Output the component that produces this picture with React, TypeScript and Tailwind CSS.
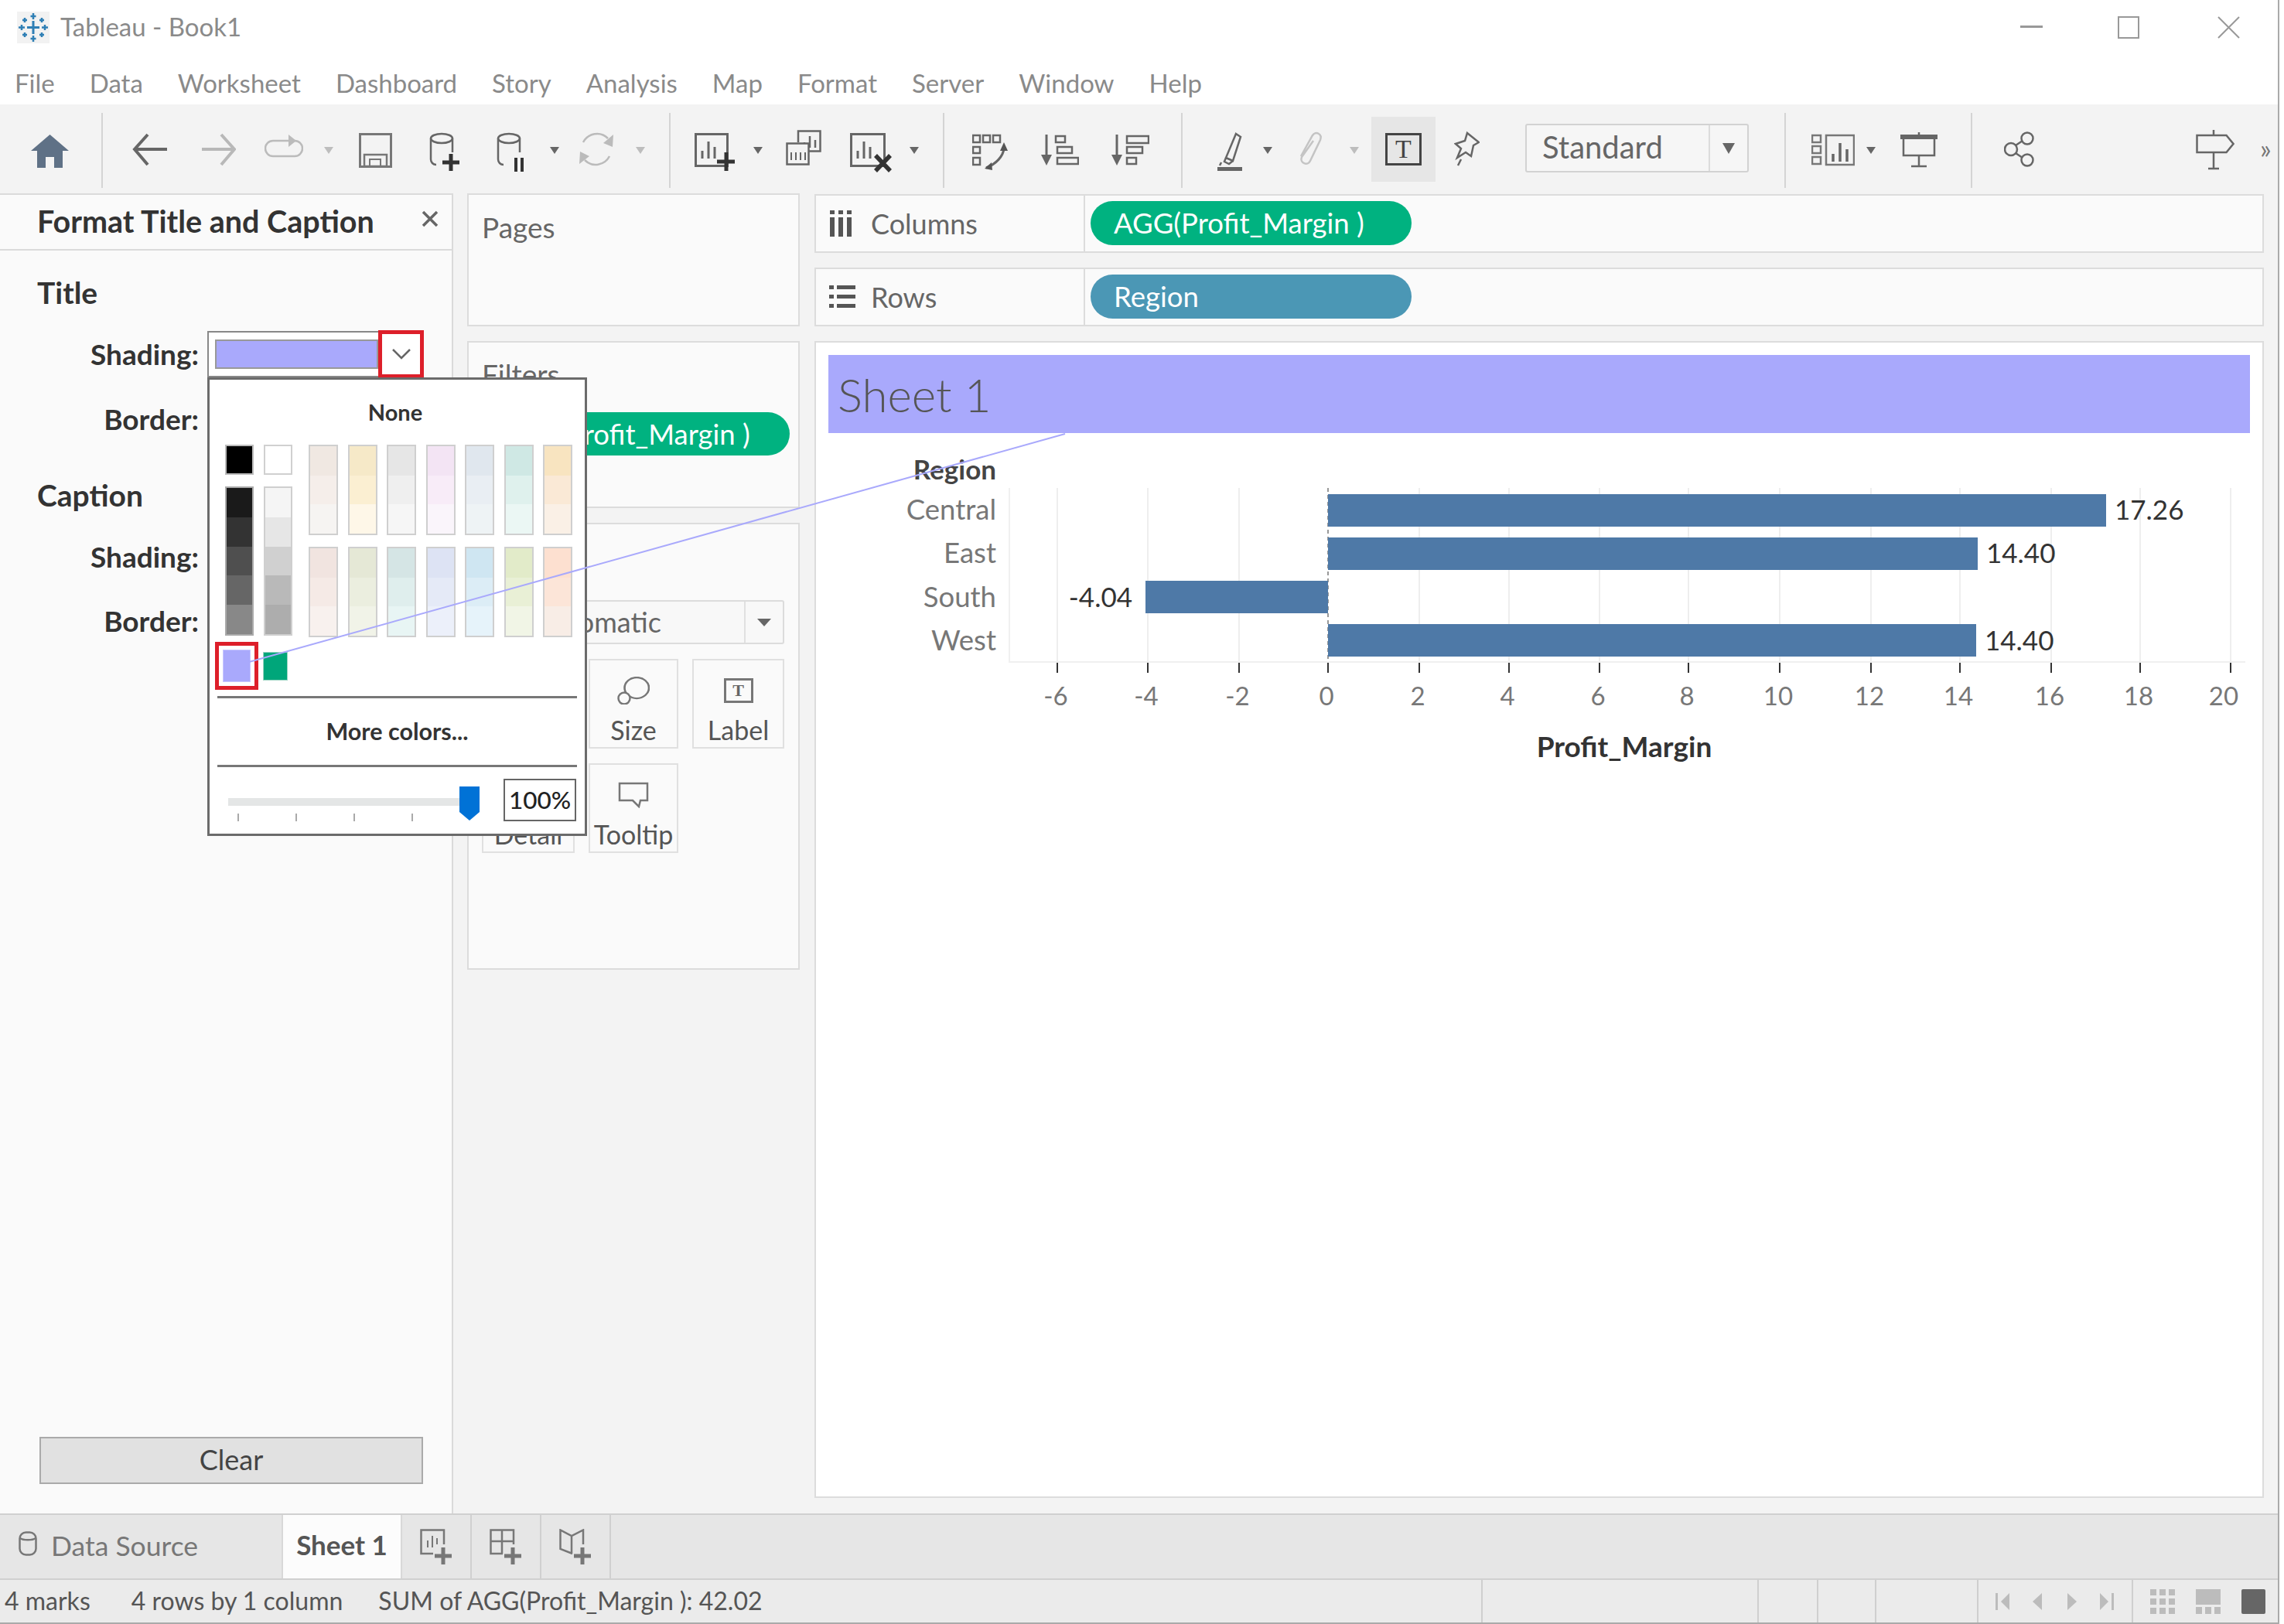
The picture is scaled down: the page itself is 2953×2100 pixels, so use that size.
import type { ReactNode } from 'react'

const LILAC = '#a9a9fc'

type IconProps = { w: number; h?: number; className?: string; children: ReactNode }

// svg sized in screen px so the coordinates below read straight off the screenshot
function Icon({ w, h = 64, className, children }: IconProps) {
  return (
    <svg width={w} height={h} viewBox={`0 0 ${w} ${h}`} className={`shrink-0 ${className ?? ''}`} fill="none">
      {children}
    </svg>
  )
}

function Sep({ className }: { className: string }) {
  return <div className={`mt-[-14px] h-[97px] w-[2px] shrink-0 bg-[#d4d4d4] ${className}`} />
}

function Caret({ className, light }: { className: string; light?: boolean }) {
  return (
    <Icon w={12} className={className}>
      <polygon points="0,30 12,30 6,39" fill={light ? '#bdbdbd' : '#666'} />
    </Icon>
  )
}

function Cylinder({ stroke = '#666' }: { stroke?: string }) {
  return (
    <g stroke={stroke} strokeWidth="2.5">
      <ellipse cx="16" cy="19" rx="14" ry="6" />
      <path d="M2 19v27c0 4 3 7 7 7M30 19v18" />
    </g>
  )
}

function Bars({ x, y, s = '#666' }: { x: number; y: number; s?: string }) {
  return (
    <g stroke={s} strokeWidth="3">
      <path d={`M${x} ${y}v-10M${x + 8} ${y}v-22M${x + 16} ${y}v-15`} />
    </g>
  )
}

function Toolbar() {
  return (
    <div className="flex h-[115px] shrink-0 items-start bg-[#f3f3f3] pt-[25px] pl-[40px]">
      <Icon w={49}>
        <path d="M24.5 14 49 35h-8v22H30V43H19v14H8V35H0z" fill="#5f7186" />
      </Icon>
      <Sep className="ml-[42px]" />
      <Icon w={45} className="ml-[38px]">
        <path d="M45 33H4M20 14 3 33l17 20" stroke="#666" strokeWidth="4" />
      </Icon>
      <Icon w={44} className="ml-[45px]">
        <path d="M0 33h41M25 14l17 19-17 20" stroke="#b8b8b8" strokeWidth="4" />
      </Icon>
      <Icon w={50} className="ml-[37px]">
        <path d="M31 22H11a10 10 0 0 0 0 20h28a10 10 0 0 0 0-20h-1" stroke="#bbb" strokeWidth="2.5" />
        <polygon points="31,14 41,22 31,30" fill="#bbb" />
      </Icon>
      <Caret light className="ml-[27px]" />
      <Icon w={43} className="ml-[33px]">
        <rect x="1.5" y="13.5" width="40" height="42" stroke="#777" strokeWidth="3" />
        <rect x="7" y="40" width="29" height="15" stroke="#777" strokeWidth="2.5" />
        <rect x="14" y="46" width="14" height="9" stroke="#777" strokeWidth="2" />
      </Icon>
      <Icon w={39} className="ml-[48px]">
        <Cylinder />
        <path d="M28 39v22M17 50h22" stroke="#333" strokeWidth="5" />
      </Icon>
      <Icon w={35} className="ml-[48px]">
        <Cylinder />
        <path d="M25 44v18M33 44v18" stroke="#333" strokeWidth="4" />
      </Icon>
      <Caret className="ml-[34px]" />
      <Icon w={47} className="ml-[24px]">
        <path d="M7 24a20 20 0 0 1 32-5M41 42a20 20 0 0 1-32 5" stroke="#bbb" strokeWidth="2.5" />
        <polygon points="46,14 45,30 33,25" fill="#bbb" />
        <polygon points="2,52 3,36 15,42" fill="#bbb" />
      </Icon>
      <Caret light className="ml-[28px]" />
      <Sep className="ml-[31px]" />
      <Icon w={52} className="ml-[31px]">
        <rect x="1.5" y="13.5" width="41" height="41" stroke="#666" strokeWidth="3" />
        <Bars x={10} y={45} />
        <path d="M41 37v24M29 49h23" stroke="#333" strokeWidth="5" />
      </Icon>
      <Caret className="ml-[24px]" />
      <Icon w={46} className="ml-[30px]">
        <path d="M16 24V9.5h28.5v26H30" stroke="#666" strokeWidth="2.5" />
        <path d="M24 31v-7M31 31V16M38 31v-10" stroke="#666" strokeWidth="2.5" />
        <rect x="1.5" y="25.5" width="28" height="27" stroke="#666" strokeWidth="2.5" fill="#f3f3f3" />
        <path d="M7 47v-10M13 47v-10M19 47v-10M25 47v-10" stroke="#666" strokeWidth="2" />
      </Icon>
      <Icon w={54} className="ml-[37px]">
        <rect x="1.5" y="13.5" width="43" height="41" stroke="#666" strokeWidth="3" />
        <Bars x={10} y={45} />
        <path d="M33 41l19 20M52 41 33 61" stroke="#333" strokeWidth="5.5" />
      </Icon>
      <Caret className="ml-[23px]" />
      <Sep className="ml-[31px]" />
      <Icon w={46} className="ml-[36px]">
        <g stroke="#666" strokeWidth="2.5">
          <rect x="1" y="15" width="9" height="9" />
          <rect x="14" y="15" width="9" height="9" />
          <rect x="27" y="15" width="9" height="9" />
          <rect x="1" y="30" width="9" height="8" />
          <rect x="1" y="44" width="9" height="9" />
          <path d="M41 32C40 42 31 52 18 57" strokeWidth="3" />
        </g>
        <polygon points="41,24 46,35 36,35" fill="#555" />
        <polygon points="16,58 25,50 26,60" fill="#555" />
      </Icon>
      <Icon w={51} className="ml-[41px]">
        <path d="M9 14v30" stroke="#666" strokeWidth="3" />
        <polygon points="2,40 16,40 9,54" fill="#666" />
        <g stroke="#666" strokeWidth="2.5">
          <rect x="21" y="16" width="12" height="8" />
          <rect x="23" y="30" width="19" height="8" />
          <rect x="23" y="44" width="27" height="8" />
        </g>
      </Icon>
      <Icon w={50} className="ml-[41px]">
        <path d="M8 14v30" stroke="#666" strokeWidth="3" />
        <polygon points="1,40 15,40 8,54" fill="#666" />
        <g stroke="#666" strokeWidth="2.5">
          <rect x="21" y="16" width="28" height="9" />
          <rect x="21" y="30" width="20" height="8" />
          <rect x="21" y="44" width="12" height="8" />
        </g>
      </Icon>
      <Sep className="ml-[41px]" />
      <Icon w={32} className="ml-[45px]">
        <path d="M24 13l6 4-10 31-9-4zM11 44l-2 5 6 3 5-4" stroke="#666" strokeWidth="2.5" />
        <path d="M5 50l-2 4" stroke="#666" strokeWidth="2.5" />
        <rect x="0" y="56" width="32" height="5" fill="#666" />
      </Icon>
      <Caret className="ml-[27px]" />
      <Icon w={33} className="ml-[33px]">
        <path
          d="M4 42 19 15c4-6 13-2 10 6L16 48c-3 7-14 3-11-5L20 22"
          stroke="#c4c4c4"
          strokeWidth="2.5"
        />
      </Icon>
      <Caret light className="ml-[34px]" />
      <div className="ml-[16px] mt-[-9px] flex h-[84px] w-[83px] shrink-0 items-center justify-center bg-[#e6e6e6]">
        <span className="flex h-[42px] w-[47px] items-center justify-center border-[3px] border-[#444] text-[34px] leading-none text-[#444] [font-family:'Liberation_Serif',serif]">
          T
        </span>
      </div>
      <Icon w={33} className="ml-[24px]">
        <path d="M17 12 32 24l-7 4-3 14-7-5-11 7 5-12-7-6 12-4z" stroke="#666" strokeWidth="2.5" />
        <path d="M9 46 5 54" stroke="#666" strokeWidth="2.5" />
      </Icon>
      <div className="ml-[59px] flex h-[63px] w-[289px] shrink-0 rounded-[3px] border-2 border-[#d2d2d2] bg-[#f6f6f6]">
        <span className="flex-1 pl-[20px] text-[40px] leading-[56px] text-[#666]">Standard</span>
        <span className="flex w-[50px] items-center justify-center border-l-2 border-[#dcdcdc]">
          <svg width="16" height="14" viewBox="0 0 16 14">
            <polygon points="0,0 16,0 8,14" fill="#666" />
          </svg>
        </span>
      </div>
      <Sep className="ml-[46px]" />
      <Icon w={56} className="ml-[33px]">
        <g stroke="#777" strokeWidth="2.5">
          <rect x="1" y="15" width="11" height="9" />
          <rect x="1" y="29" width="11" height="9" />
          <rect x="1" y="43" width="11" height="9" />
          <rect x="19" y="15" width="36" height="38" />
        </g>
        <path d="M28 49V39M37 49V25M46 49V33" stroke="#666" strokeWidth="3.5" />
      </Icon>
      <Caret className="ml-[15px]" />
      <Icon w={48} className="ml-[32px]">
        <rect x="0" y="14" width="48" height="6" fill="#666" />
        <path d="M24 11v3M4 19v22h40V19M24 41v13M14 55h20" stroke="#666" strokeWidth="2.5" />
      </Icon>
      <Sep className="ml-[43px]" />
      <Icon w={39} className="ml-[41px]">
        <g stroke="#666" strokeWidth="2.5">
          <circle cx="9" cy="33" r="8" />
          <circle cx="30" cy="19" r="7.5" />
          <circle cx="30" cy="47" r="7.5" />
          <path d="M15 28l9-6M15 38l9 6" />
        </g>
      </Icon>
      <Icon w={50} className="ml-[209px]">
        <path d="M1.5 15h38l9 11-9 11h-38zM23 8v7M23 37v21M16 58h14" stroke="#666" strokeWidth="2.5" />
      </Icon>
      <span className="ml-[33px] text-[34px] leading-[64px] text-[#777]">»</span>
    </div>
  )
}

const TILES_TOP = [
  ['#f0e8e2', '#f5eeea', '#f6f4f2'],
  ['#f6e9c8', '#fbefd2', '#fef7e8'],
  ['#e6e6e6', '#efefef', '#f6f6f6'],
  ['#f3e4f4', '#f8ecf8', '#faf5fb'],
  ['#e0e7ee', '#e9eef3', '#eef3f5'],
  ['#cfe8e4', '#dff1ed', '#ebf7f4'],
  ['#f8e4c0', '#fae9d6', '#faf0e6'],
]
const TILES_BOTTOM = [
  ['#f1e4e0', '#f5eae6', '#f8f1ee'],
  ['#e5e8d6', '#ebeedf', '#f1f3e8'],
  ['#d5e5e5', '#dfeeed', '#e8f5f4'],
  ['#dde3f4', '#e5eaf7', '#ecf0fa'],
  ['#cfe6f2', '#dcedf6', '#e6f3fa'],
  ['#e2ebc9', '#e9f0d6', '#f1f5e6'],
  ['#fde0d0', '#fce5d8', '#f8ede6'],
]

function Strip({ colors, dark }: { colors: string[]; dark?: boolean }) {
  return (
    <div className={`flex flex-col border-2 ${dark ? 'border-[#aaa]' : 'border-[#cfcfcf]'}`}>
      {colors.map((c) => (
        <div key={c} className="min-h-0 flex-1" style={{ background: c }} />
      ))}
    </div>
  )
}

function ColorPopup() {
  return (
    <div className="absolute top-[488px] left-[268px] flex h-[593px] w-[491px] flex-col border-[3px] border-[#6b6b6b] bg-white">
      <div className="mt-[24px] w-[480px] text-center text-[29px] leading-[36px] font-bold text-[#333]">None</div>
      <div className="mt-[24px] ml-[20px] flex">
        <div className="flex w-[87px] flex-col">
          <div className="flex gap-[13px]">
            <div className="h-[39px] w-[37px] border-2 border-[#bbb] bg-black" />
            <div className="h-[39px] w-[37px] border-2 border-[#d0d0d0] bg-white" />
          </div>
          <div className="mt-[15px] grid h-[193px] grid-cols-2 gap-x-[13px]">
            <Strip dark colors={['#1a1a1a', '#333333', '#4f4f4f', '#666666', '#888888']} />
            <Strip colors={['#f5f5f5', '#e6e6e6', '#d0d0d0', '#b9b9b9', '#adadad']} />
          </div>
        </div>
        <div className="ml-[21px] flex w-[341px] flex-col gap-[15px]">
          {[TILES_TOP, TILES_BOTTOM].map((row, i) => (
            <div key={i} className="grid h-[117px] grid-cols-7 gap-x-[12.5px]">
              {row.map((colors) => (
                <Strip key={colors[0]} colors={colors} />
              ))}
            </div>
          ))}
        </div>
      </div>
      <div className="mt-[6px] ml-[7px] flex items-center">
        <div className="h-[62px] w-[56px] border-[5px] border-[#dd1f2a] p-[5px]">
          <div className="h-full w-full border border-[#c8c8ff] bg-[#a9a9fc]" />
        </div>
        <div className="ml-[6px] h-[37px] w-[32px] border border-[#9ad4c2] bg-[#00a67a]" />
      </div>
      <div className="mt-[8px] ml-[10px] h-[3px] w-[465px] shrink-0 bg-[#777]" />
      <div className="mt-[22px] ml-[10px] w-[465px] text-center text-[30.5px] leading-[40px] font-bold text-[#333]">
        More colors...
      </div>
      <div className="mt-[24px] ml-[10px] h-[3px] w-[465px] shrink-0 bg-[#777]" />
      <div className="mt-[15px] ml-[24px] flex items-start">
        <div className="relative h-[55px] w-[325px]">
          <div className="mt-[25px] h-[10px] w-[312px] bg-[#e4e6e6]" />
          <div className="mt-[10px] ml-[12px] flex gap-[73px]">
            <div className="h-[10px] w-[2px] bg-[#aaa]" />
            <div className="h-[10px] w-[2px] bg-[#aaa]" />
            <div className="h-[10px] w-[2px] bg-[#aaa]" />
            <div className="h-[10px] w-[2px] bg-[#aaa]" />
          </div>
          <svg width="26" height="44" viewBox="0 0 26 44" className="absolute top-[10px] right-0">
            <polygon points="0,0 26,0 26,33 13,44 0,33" fill="#0072d6" />
          </svg>
        </div>
        <div className="ml-[31px] flex h-[55px] w-[94px] items-center justify-center border-2 border-[#666] text-[31.5px] font-medium text-[#222]">
          100%
        </div>
      </div>
    </div>
  )
}

function FormatPanel() {
  return (
    <aside className="flex w-[586px] shrink-0 flex-col border-t-2 border-r-2 border-[#dadada] bg-[#fafafa]">
      <div className="flex h-[72px] items-center border-b-2 border-[#dadada] pb-[2px] pl-[48px] shrink-0">
        <span className="text-[39.5px] font-bold text-[#333]">Format Title and Caption</span>
        <svg width="22" height="22" viewBox="0 0 22 22" className="ml-[61px] mb-[6px]">
          <path d="M2 2l18 18M20 2 2 20" stroke="#666" strokeWidth="3.5" />
        </svg>
      </div>
      <div className="mt-[32px] pl-[48px] text-[39px] leading-[44px] font-bold text-[#333]">Title</div>
      <div className="relative mt-[36px] flex h-[44px] items-center">
        <span className="w-[257px] text-right text-[37px] font-bold text-[#333]">Shading:</span>
        <div className="relative ml-[11px] flex h-[60px] w-[279px] shrink-0 items-center border-2 border-[#888] bg-white pl-[8px]">
          <div className="h-[38px] w-[211px] border-2 border-[#999] bg-[#a9a9fc]" />
          <div className="absolute top-[-3px] right-[-3px] flex h-[62px] w-[59px] items-center justify-center border-[5px] border-[#dd1f2a] bg-white">
            <svg width="24" height="14" viewBox="0 0 24 14">
              <path d="M1 1l11 11L23 1" stroke="#666" strokeWidth="2.5" fill="none" />
            </svg>
          </div>
        </div>
      </div>
      <div className="mt-[40px] h-[44px] w-[257px] text-right text-[37px] leading-[44px] font-bold text-[#333]">
        Border:
      </div>
      <div className="mt-[54px] pl-[48px] text-[39px] leading-[44px] font-bold text-[#333]">Caption</div>
      <div className="mt-[36px] h-[44px] w-[257px] text-right text-[37px] leading-[44px] font-bold text-[#333]">
        Shading:
      </div>
      <div className="mt-[39px] h-[44px] w-[257px] text-right text-[37px] leading-[44px] font-bold text-[#333]">
        Border:
      </div>
      <div className="mt-auto mb-[38px] ml-[51px] flex h-[61px] w-[496px] items-center justify-center border-2 border-[#aaa] bg-[#e1e1e1] pb-[4px] text-[36px] text-[#444]">
        Clear
      </div>
    </aside>
  )
}

function MarkButton({ label, children }: { label: string; children?: ReactNode }) {
  return (
    <div className="flex h-[116px] flex-col items-center border-2 border-[#e0e0e0] bg-[#fafafa] pt-[14px] text-[34px] leading-[40px] text-[#555]">
      <div className="flex h-[50px] items-center">{children}</div>
      <span className="mt-[6px]">{label}</span>
    </div>
  )
}

function CardsColumn() {
  return (
    <div className="ml-[18px] flex w-[430px] shrink-0 flex-col gap-[19px]">
      <section className="h-[172px] border-2 border-[#dcdcdc] bg-[#fafafa] pt-[22px] pl-[17px] text-[37px] leading-[40px] text-[#666]">
        Pages
      </section>
      <section className="h-[216px] border-2 border-[#dcdcdc] bg-[#fafafa] pt-[21px] pl-[17px]">
        <div className="text-[37px] leading-[40px] text-[#666]">Filters</div>
        <div className="mt-[29px] flex h-[56px] w-[398px] items-center rounded-full bg-[#00b280] pl-[23px] text-[36.5px] whitespace-nowrap text-white">
          AGG(Profit_Margin )
        </div>
      </section>
      <section className="h-[578px] border-2 border-[#dcdcdc] bg-[#fafafa] pt-[98px] pl-[17px]">
        <div className="flex h-[57px] w-[391px] rounded-[3px] border-2 border-[#dcdcdc] bg-[#f8f8f8]">
          <span className="flex-1 pl-[66px] text-[36px] leading-[52px] text-[#666]">Automatic</span>
          <span className="flex w-[50px] items-center justify-center border-l-2 border-[#e0e0e0]">
            <svg width="18" height="10" viewBox="0 0 18 10">
              <polygon points="0,0 18,0 9,10" fill="#666" />
            </svg>
          </span>
        </div>
        <div className="mt-[19px] grid w-[391px] grid-cols-[120px_116px_119px] gap-x-[18px] gap-y-[19px]">
          <MarkButton label="" />
          <MarkButton label="Size">
            <svg width="42" height="36" viewBox="0 0 42 36" fill="none" stroke="#777" strokeWidth="2.5">
              <circle cx="25" cy="15" r="15" transform="matrix(1.05 0 0 .9 -1 1)" />
              <circle cx="9" cy="28" r="7.5" fill="#fafafa" />
            </svg>
          </MarkButton>
          <MarkButton label="Label">
            <span className="flex h-[32px] w-[38px] items-center justify-center border-[3px] border-[#777] text-[22px] font-bold leading-none text-[#666] [font-family:'Liberation_Serif',serif]">
              T
            </span>
          </MarkButton>
          <MarkButton label="Detail" />
          <MarkButton label="Tooltip">
            <svg width="40" height="34" viewBox="0 0 40 34" fill="none" stroke="#777" strokeWidth="2.5">
              <path d="M2 2h36v22h-9l-2 8-8-8H2z" />
            </svg>
          </MarkButton>
        </div>
      </section>
    </div>
  )
}

function Shelf({ label, icon, pill, pillClass }: { label: string; icon: ReactNode; pill: string; pillClass: string }) {
  return (
    <div className="flex h-[76px] shrink-0 border-2 border-[#dcdcdc] bg-[#fafafa]">
      <div className="flex w-[348px] items-center border-r-2 border-[#dcdcdc] pl-[17px]">
        <span className="flex w-[54px] shrink-0">{icon}</span>
        <span className="text-[36px] text-[#666]">{label}</span>
      </div>
      <div className={`mt-[7px] ml-[7px] flex h-[57px] w-[415px] items-center rounded-full pl-[30px] text-[36.5px] text-white ${pillClass}`}>
        {pill}
      </div>
    </div>
  )
}

function BarChart() {
  // [value, tick x, label x] - the last label is nudged back inside the plot like Tableau does
  const ticks = [
    [-6, 1367, 1365],
    [-4, 1484, 1482],
    [-2, 1602, 1600],
    [0, 1717, 1715],
    [2, 1835, 1833],
    [4, 1951, 1949],
    [6, 2068, 2066],
    [8, 2183, 2181],
    [10, 2301, 2299],
    [12, 2419, 2417],
    [14, 2534, 2532],
    [16, 2652, 2650],
    [18, 2767, 2765],
    [20, 2884, 2875],
  ]
  const rows = [
    { name: 'Central', y: 660, x0: 1717, x1: 2723, top: 639, value: '17.26' },
    { name: 'East', y: 716, x0: 1717, x1: 2557, top: 695, value: '14.40' },
    { name: 'South', y: 773, x0: 1481, x1: 1717, top: 751, value: '-4.04' },
    { name: 'West', y: 829, x0: 1717, x1: 2555, top: 807, value: '14.40' },
  ]
  return (
    <svg width="1838" height="440" viewBox="1071 560 1838 440" className="block">
      <path d="M1305 631V856H2903" stroke="#f0f0f0" strokeWidth="2" fill="none" />
      {ticks.map(([t, x, lx]) => (
        <g key={t}>
          <line x1={x} x2={x} y1="631" y2="856" stroke={t === 0 ? '#999' : '#eeeeee'} strokeWidth="2" strokeDasharray={t === 0 ? '5 4' : undefined} />
          <line x1={x} x2={x} y1="857" y2="870" stroke="#333" strokeWidth="2" />
          <text x={lx} y="912" textAnchor="middle" fontSize="33" fill="#777">
            {t}
          </text>
        </g>
      ))}
      <text x="1288" y="620" textAnchor="end" fontSize="35" fontWeight="700" fill="#444">
        Region
      </text>
      {rows.map((r) => (
        <g key={r.name}>
          <text x="1288" y={r.y + 12} textAnchor="end" fontSize="36.5" fill="#777">
            {r.name}
          </text>
          <rect x={r.x0} y={r.top} width={r.x1 - r.x0} height="42" fill="#4e79a7" />
          {r.x0 < 1717 ? (
            <text x="1464" y={r.y + 12} textAnchor="end" fontSize="35" fill="#333">
              {r.value}
            </text>
          ) : (
            <text x={r.x1 + 11} y={r.y + 12} fontSize="35" fill="#333">
              {r.value}
            </text>
          )}
        </g>
      ))}
      <text x="2100" y="979" textAnchor="middle" fontSize="37" fontWeight="700" fill="#333">
        Profit_Margin
      </text>
    </svg>
  )
}

function SheetAdd({ children }: { children: ReactNode }) {
  return (
    <div className="flex h-full w-[90px] items-center justify-center border-r-2 border-[#d0d0d0]">
      <svg width="42" height="46" viewBox="0 0 42 46" fill="none">
        <g stroke="#777" strokeWidth="2.5">{children}</g>
        <path d="M30 24v22M19 35h22" stroke="#777" strokeWidth="5" />
      </svg>
    </div>
  )
}

function TabBar() {
  return (
    <div className="flex h-[84px] shrink-0 items-stretch border-t-2 border-[#d0d0d0] bg-[#e6e6e6]">
      <div className="flex w-[364px] items-center pl-[24px]">
        <svg width="24" height="32" viewBox="0 0 24 32" fill="none" stroke="#777" strokeWidth="2.5" className="mb-[8px]">
          <rect x="1.5" y="1.5" width="21" height="29" rx="8" />
          <path d="M2 9c4 3 16 3 20 0" />
        </svg>
        <span className="ml-[18px] pb-[2px] text-[35.5px] text-[#777]">Data Source</span>
      </div>
      <div className="flex w-[156px] items-center justify-center border-x-2 border-[#d8d8d8] bg-[#fcfcfc] pb-[6px] text-[35px] font-bold text-[#555]">
        Sheet 1
      </div>
      <SheetAdd>
        <path d="M17 32H1.5V1.5H31V20" />
        <path d="M10 24V15M16 24V9M22 20v-8" strokeWidth="2" />
      </SheetAdd>
      <SheetAdd>
        <path d="M17 32H1.5V1.5H31V20M1.5 16H31M16 1.5V32" />
      </SheetAdd>
      <SheetAdd>
        <path d="M17 32 1.5 26V1.5L16 9 31 1.5V20M16 9v23" />
      </SheetAdd>
    </div>
  )
}

function StatusBar() {
  const cell = 'h-full shrink-0 border-l-2 border-[#cfcfcf]'
  return (
    <div className="flex h-[59px] shrink-0 items-stretch border-t-2 border-b-2 border-[#d0d0d0] border-b-[#aaaaaa] bg-[#ebebeb] text-[32px] text-[#555]">
      <div className="flex w-[1915px] items-center pb-[2px] pl-[6px]">
        <span>4 marks</span>
        <span className="ml-[53px]">4 rows by 1 column</span>
        <span className="ml-[46px]">SUM of AGG(Profit_Margin ): 42.02</span>
      </div>
      <div className={`${cell} w-[357px]`} />
      <div className={`${cell} w-[77px]`} />
      <div className={`${cell} w-[75px]`} />
      <div className={`${cell} w-[132px]`} />
      <div className={`${cell} flex w-[200px] items-center pl-[22px]`}>
        <svg width="18" height="22" viewBox="0 0 18 22" fill="#bcbcbc">
          <rect width="3" height="22" />
          <polygon points="18,0 18,22 7,11" />
        </svg>
        <svg width="12" height="22" viewBox="0 0 12 22" fill="#bcbcbc" className="ml-[30px]">
          <polygon points="12,0 12,22 0,11" />
        </svg>
        <svg width="12" height="22" viewBox="0 0 12 22" fill="#bcbcbc" className="ml-[33px]">
          <polygon points="0,0 0,22 12,11" />
        </svg>
        <svg width="18" height="22" viewBox="0 0 18 22" fill="#bcbcbc" className="ml-[30px]">
          <polygon points="0,0 0,22 11,11" />
          <rect x="15" width="3" height="22" />
        </svg>
      </div>
      <div className={`${cell} flex flex-1 items-center pl-[22px]`}>
        <svg width="32" height="32" viewBox="0 0 32 32" fill="#bcbcbc">
          <path d="M0 0h8v8H0zM12 0h8v8h-8zM24 0h8v8h-8zM0 12h8v8H0zM12 12h8v8h-8zM24 12h8v8h-8zM0 24h8v8H0zM12 24h8v8h-8zM24 24h8v8h-8z" />
        </svg>
        <svg width="32" height="32" viewBox="0 0 32 32" fill="#bcbcbc" className="ml-[27px]">
          <path d="M0 0h32v20H0zM0 23h8v9H0zM12 23h8v9h-8zM24 23h8v9h-8z" />
        </svg>
        <div className="ml-[27px] h-[32px] w-[31px] rounded-[2px] bg-[#666]" />
      </div>
    </div>
  )
}

export default function App() {
  return (
    <div className="relative h-[2100px] w-[2953px] overflow-hidden bg-white [font-family:Lato,sans-serif]">
      <div className="flex h-[2100px] w-[2947px] flex-col border-r-2 border-[#aaaaaa]">
        {/* window chrome */}
        <div className="h-[135px] shrink-0 bg-white">
          <div className="flex h-[70px] items-center pl-[22px]">
            <svg width="42" height="41" viewBox="0 0 42 41">
              <rect x="0" y="0" width="42" height="41" fill="#f2f2f2" />
              <g fill="none" stroke="#2f7fb5" strokeWidth="2.5">
                <path d="M21 12v17M13 20.5h16" strokeWidth="3" />
                <path d="M21 2v8M17.5 6h7M21 31v8M17.5 35h7M4 20.5h0M2 20.5h8M6 17v7M32 20.5h8M36 17v7" />
                <path d="M10 8v6M7 11h6M32 8v6M29 11h6M10 27v6M7 30h6M32 27v6M29 30h6" />
              </g>
            </svg>
            <span className="ml-[14px] text-[33px] text-[#8a8a8a]">Tableau - Book1</span>
            <svg width="29" height="4" viewBox="0 0 29 4" className="ml-[2300px]">
              <rect width="29" height="3" fill="#999" />
            </svg>
            <svg width="28" height="29" viewBox="0 0 28 29" className="ml-[97px]" fill="none">
              <rect x="1" y="1" width="26" height="27" stroke="#999" strokeWidth="2" />
            </svg>
            <svg width="29" height="29" viewBox="0 0 29 29" className="ml-[101px]" fill="none">
              <path d="M1 1l27 27M28 1 1 28" stroke="#999" strokeWidth="2" />
            </svg>
          </div>
          <div className="flex gap-[45px] pt-[17px] pl-[19px] text-[33px] leading-[40px] text-[#8a8a8a]">
            <span>File</span>
            <span>Data</span>
            <span>Worksheet</span>
            <span>Dashboard</span>
            <span>Story</span>
            <span>Analysis</span>
            <span>Map</span>
            <span>Format</span>
            <span>Server</span>
            <span>Window</span>
            <span>Help</span>
          </div>
        </div>

        <Toolbar />

        <div className="flex min-h-0 flex-1 bg-[#f3f3f3]">
          <FormatPanel />
          <CardsColumn />
          <main className="ml-[19px] flex w-[1874px] shrink-0 flex-col gap-[19px] pt-[1px] pb-[20px]">
            <Shelf
              label="Columns"
              pill="AGG(Profit_Margin )"
              pillClass="bg-[#00b280]"
              icon={
                <svg width="30" height="34" viewBox="0 0 30 34" fill="#555">
                  <path d="M1 0h6v5H1zM12 0h6v5h-6zM23 0h6v5h-6zM1 9h6v25H1zM12 9h6v25h-6zM23 9h6v25h-6z" />
                </svg>
              }
            />
            <Shelf
              label="Rows"
              pill="Region"
              pillClass="bg-[#4b97b5]"
              icon={
                <svg width="34" height="30" viewBox="0 0 34 30" fill="#555">
                  <path d="M0 0h6v5H0zM10 0h24v5H10zM0 12h6v5H0zM10 12h24v5H10zM0 24h6v5H0zM10 24h24v5H10z" />
                </svg>
              }
            />
            <section className="min-h-0 flex-1 border-2 border-[#dcdcdc] bg-white px-[16px] pt-[16px]">
              <div className="flex h-[101px] items-center bg-[#a9a9fc] pl-[12px] text-[60px] font-light text-[#555]">
                Sheet 1
              </div>
              <BarChart />
            </section>
          </main>
        </div>

        <TabBar />
        <StatusBar />
      </div>

      <ColorPopup />

      {/* annotation line from the recent swatch up to the title band */}
      <svg width="2953" height="2100" viewBox="0 0 2953 2100" className="pointer-events-none absolute top-0 left-0">
        <line x1="322" y1="856" x2="1377" y2="561" stroke={LILAC} strokeWidth="2" />
      </svg>
    </div>
  )
}
